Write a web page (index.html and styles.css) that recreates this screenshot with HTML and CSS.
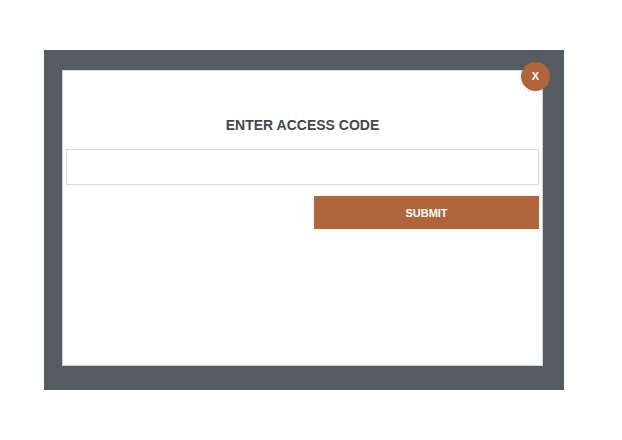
FILE: index.html
```html
<!DOCTYPE html>
<html>
<head>
<meta charset="utf-8">
<link rel="stylesheet" href="styles.css">
</head>
<body>
<div class="page">
  <div class="overlay">
    <div class="modal">
      <button class="close">X</button>
      <h2 class="title">ENTER ACCESS CODE</h2>
      <input class="code" type="text">
      <div class="actions">
        <button class="submit">SUBMIT</button>
      </div>
    </div>
  </div>
</div>
</body>
</html>
```
FILE: styles.css
```css
html, body {
  margin: 0;
  padding: 0;
  background: #ffffff;
  font-family: "Liberation Sans", Arial, sans-serif;
}
.page {
  padding: 50px 0 0 44px;
}
.overlay {
  width: 520px;
  height: 340px;
  box-sizing: border-box;
  background: #545c62;
  padding: 20px 21px 24px 18px;
}
.modal {
  position: relative;
  box-sizing: border-box;
  width: 481px;
  height: 296px;
  background: #ffffff;
  border: 1px solid #cfd3d5;
  padding: 0 3px;
  display: flex;
  flex-direction: column;
}
.close {
  position: absolute;
  top: -9px;
  right: -8px;
  width: 29px;
  height: 29px;
  border-radius: 50%;
  border: none;
  padding: 0;
  background: #b1653a;
  color: #ffffff;
  font-family: "Liberation Sans", Arial, sans-serif;
  font-weight: bold;
  font-size: 11px;
  line-height: 29px;
  text-align: center;
}
.title {
  margin: 46px 0 16px;
  font-size: 14px;
  line-height: 16px;
  font-weight: bold;
  color: #474747;
  text-align: center;
}
.code {
  box-sizing: border-box;
  width: 100%;
  height: 36px;
  margin: 0;
  border: 1px solid #dcdcdc;
  background: #ffffff;
  outline: none;
}
.actions {
  display: flex;
  justify-content: flex-end;
  margin-top: 11px;
}
.submit {
  width: 225px;
  height: 33px;
  border: none;
  padding: 0;
  background: #b1653a;
  color: #ffffff;
  font-family: "Liberation Sans", Arial, sans-serif;
  font-weight: bold;
  font-size: 11px;
}
```
